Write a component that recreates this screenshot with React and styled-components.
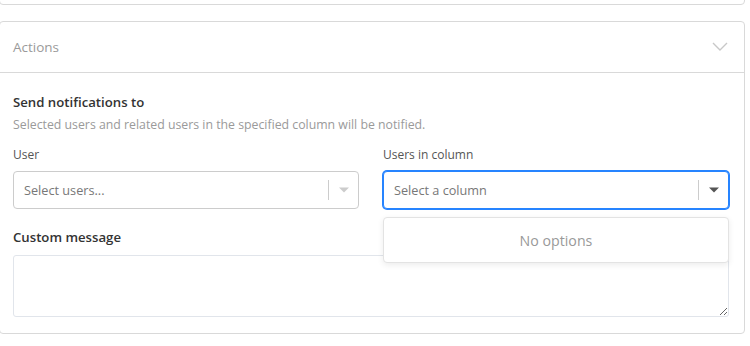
import React from "react";
import styled, { createGlobalStyle } from "styled-components";

const GlobalStyle = createGlobalStyle`
  html, body {
    margin: 0;
    padding: 0;
    background: #fff;
    overflow: hidden;
  }
  body {
    font-family: "Open Sans", "Noto Sans", sans-serif;
    color: #333;
  }
`;

const Page = styled.div`
  display: flex;
  flex-direction: column;
  gap: 16px;
  margin-top: -16px;
  margin-left: -1px;
  width: 746px;
`;

const Card = styled.div`
  border: 1px solid #d9d9d9;
  border-radius: 4px;
  background: #fff;
  height: ${(p) => p.height || "auto"};
  box-sizing: border-box;
`;

const CardHeader = styled.div`
  display: flex;
  align-items: center;
  justify-content: space-between;
  height: 50px;
  padding: 0 16px 0 13px;
  border-bottom: 1px solid #d9d9d9;
  color: #9a9a9a;
  font-size: 13.5px;
`;

const CardBody = styled.div`
  padding: 20px 15px 16px 13px;
  display: flex;
  flex-direction: column;
`;

const Title = styled.div`
  font-size: 13.2px;
  font-weight: 600;
  color: #333;
  margin-top: ${(p) => p.mt || "0"};
  line-height: 18px;
`;

const Description = styled.div`
  font-size: 12.3px;
  color: #9a9a9a;
  margin-top: 6px;
  line-height: 16px;
`;

const Row = styled.div`
  display: grid;
  grid-template-columns: 1fr 1fr;
  column-gap: 24px;
  margin-top: 14px;
`;

const Field = styled.div`
  display: flex;
  flex-direction: column;
`;

const Label = styled.div`
  font-size: 12px;
  color: #555;
  line-height: 16px;
  margin-bottom: 8px;
`;

const SelectWrap = styled.div`
  position: relative;
`;

const SelectBox = styled.div`
  height: 38px;
  box-sizing: border-box;
  display: flex;
  align-items: center;
  border: ${(p) => (p.focused ? "1px solid #2684ff" : "1px solid #cccccc")};
  box-shadow: ${(p) => (p.focused ? "0 0 0 1px #2684ff" : "none")};
  border-radius: 4px;
  padding-left: 10px;
  background: #fff;
`;

const Placeholder = styled.div`
  flex: 1;
  font-size: 12.7px;
  color: #777;
`;

const Separator = styled.span`
  width: 1px;
  height: 20px;
  background: #cccccc;
`;

const Indicator = styled.div`
  width: 29px;
  display: flex;
  justify-content: center;
  align-items: center;
`;

const Menu = styled.div`
  position: absolute;
  top: calc(100% + 8px);
  left: 0;
  right: 0;
  height: 46px;
  box-sizing: border-box;
  display: flex;
  align-items: center;
  justify-content: center;
  background: #fff;
  border: 1px solid #e3e3e3;
  border-radius: 4px;
  box-shadow: 0 2px 6px rgba(0, 0, 0, 0.08);
  color: #999;
  font-size: 14.2px;
  z-index: 2;
`;

const TextArea = styled.textarea`
  margin-top: 9px;
  height: 62px;
  box-sizing: border-box;
  border: 1px solid #e1e5eb;
  border-radius: 3px;
  resize: vertical;
  font-family: inherit;
  outline: none;
`;

const Caret = ({ color }) => (
  <svg width="12" height="8" viewBox="0 0 12 8">
    <path d="M1 1.5 L11 1.5 L6 6.5 Z" fill={color} />
  </svg>
);

const Chevron = () => (
  <svg width="16" height="10" viewBox="0 0 16 10">
    <path d="M1 1 L8 8 L15 1" fill="none" stroke="#c8c8c8" strokeWidth="1.4" />
  </svg>
);

const Select = ({ placeholder, focused, caretColor, children }) => (
  <SelectWrap>
    <SelectBox focused={focused}>
      <Placeholder>{placeholder}</Placeholder>
      <Separator />
      <Indicator>
        <Caret color={caretColor} />
      </Indicator>
    </SelectBox>
    {children}
  </SelectWrap>
);

export default function App() {
  return (
    <>
      <GlobalStyle />
      <Page>
        <Card height="21px" />
        <Card>
          <CardHeader>
            <span>Actions</span>
            <Chevron />
          </CardHeader>
          <CardBody>
            <Title>Send notifications to</Title>
            <Description>
              Selected users and related users in the specified column will be notified.
            </Description>
            <Row>
              <Field>
                <Label>User</Label>
                <Select placeholder="Select users..." caretColor="#cccccc" />
              </Field>
              <Field>
                <Label>Users in column</Label>
                <Select placeholder="Select a column" focused caretColor="#555">
                  <Menu>No options</Menu>
                </Select>
              </Field>
            </Row>
            <Title mt="19px">Custom message</Title>
            <TextArea />
          </CardBody>
        </Card>
      </Page>
    </>
  );
}
